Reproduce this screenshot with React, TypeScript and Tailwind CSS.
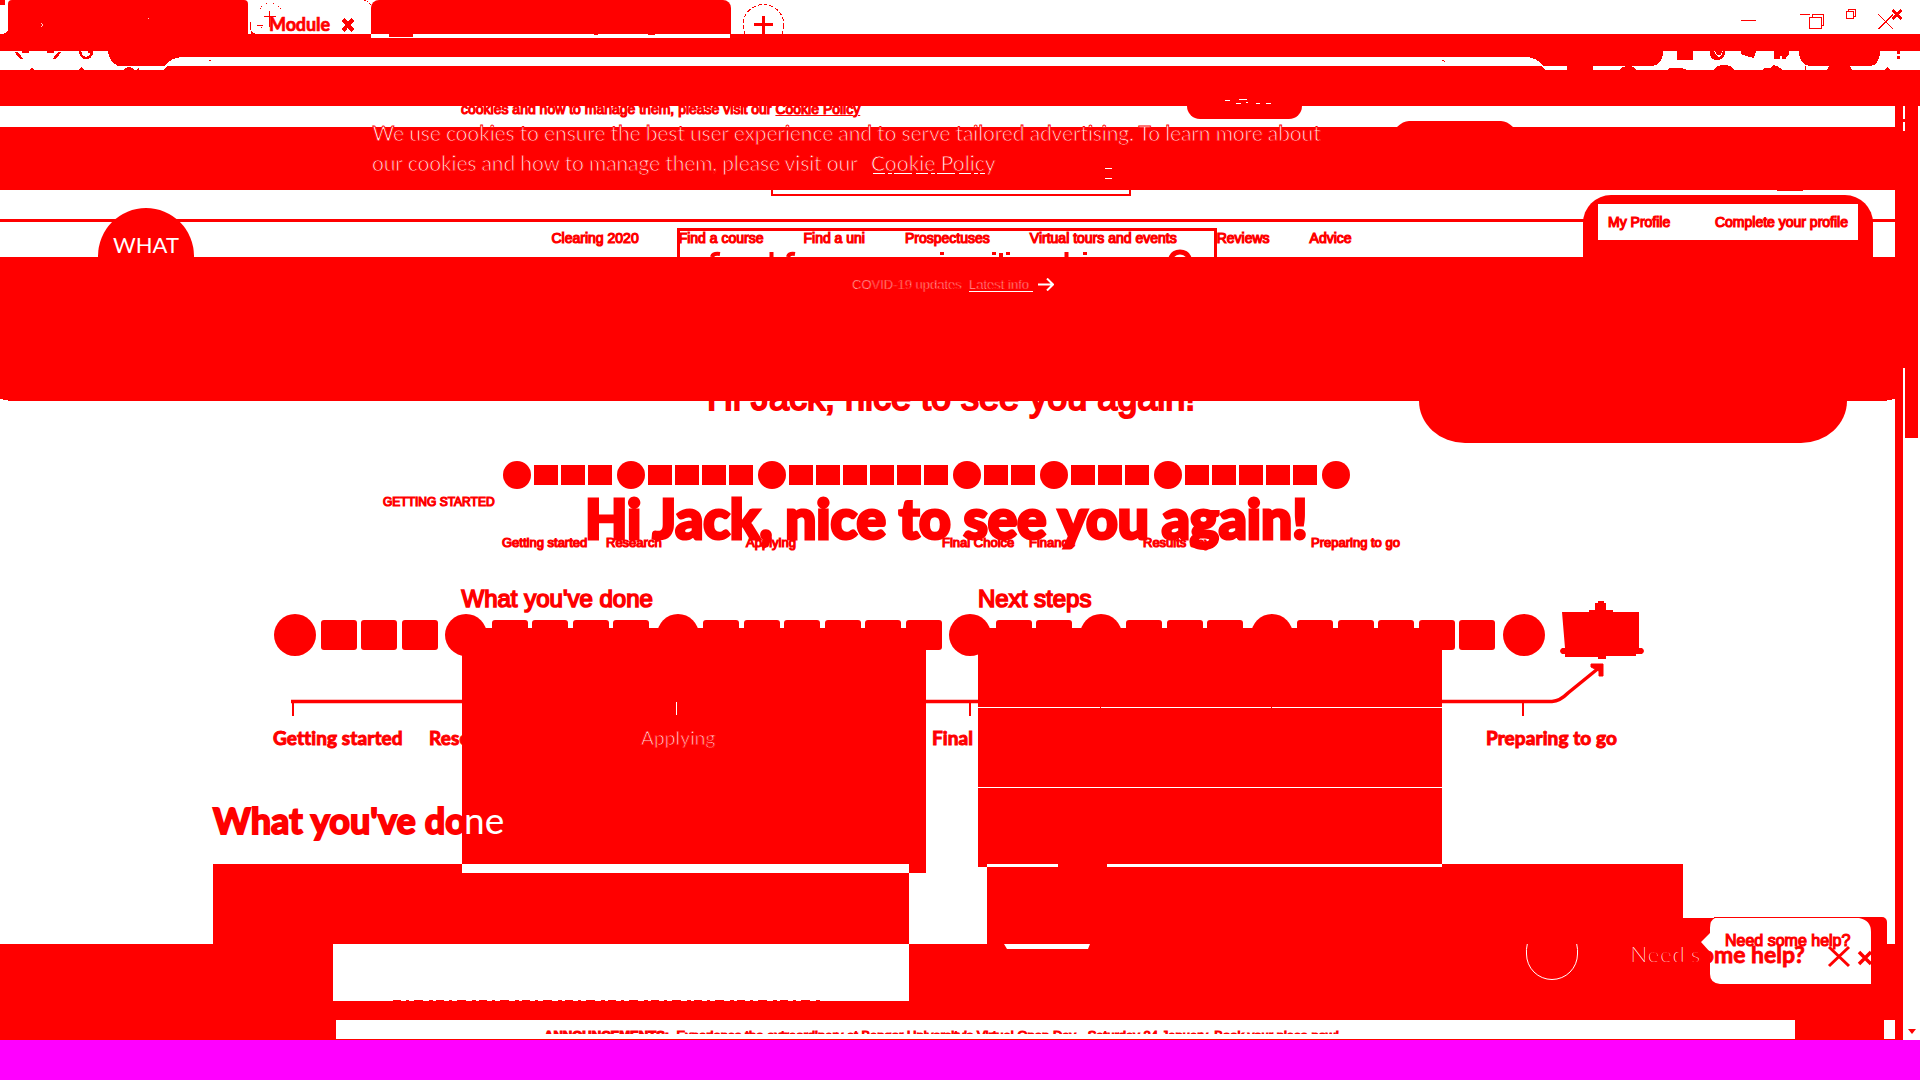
import type { ReactNode } from "react";

const STEPS = [3, 4, 6, 2, 3, 5];
const NAV = ["Clearing 2020", "Find a course", "Find a uni", "Prospectuses", "Virtual tours and events", "Reviews", "Advice"];
const SANS = "font-['Liberation_Sans',sans-serif] [-webkit-text-stroke:1.2px_#f00]";
const ETCHED = "font-['Lato',sans-serif] text-white [-webkit-text-stroke:0.9px_#f00]";

function Label({ at, children }: { at: string; children: ReactNode }) {
  return <span className={`absolute whitespace-nowrap leading-none ${at}`}>{children}</span>;
}

function Block({ at }: { at: string }) {
  return <div className={`absolute bg-[#ff0000] ${at}`} />;
}

function SmallSteps() {
  return (
    <div className="flex h-7 items-center gap-[3px] pl-[501px]">
      {STEPS.map((n, g) => (
        <div key={g} className="flex items-center gap-[3px]">
          <div className="ml-[2px] size-7 rounded-full bg-[#ff0000]" />
          {Array.from({ length: n }, (_, i) => (
            <div key={i} className="h-5 w-6 bg-[#ff0000]" />
          ))}
        </div>
      ))}
      <div className="ml-[2px] size-7 rounded-full bg-[#ff0000]" />
    </div>
  );
}

function LargeSteps() {
  return (
    <div className="flex h-[42px] items-center gap-[4.5px] pl-[271px]">
      {STEPS.map((n, g) => (
        <div key={g} className="flex items-center gap-[4.5px]">
          <div className="ml-[3px] size-[42px] rounded-full bg-[#ff0000]" />
          {Array.from({ length: n }, (_, i) => (
            <div key={i} className="h-[30px] w-9 rounded-[3px] bg-[#ff0000]" />
          ))}
        </div>
      ))}
      <div className="ml-[3px] size-[42px] rounded-full bg-[#ff0000]" />
    </div>
  );
}

function TabStrip() {
  return (
    <div className="relative flex h-[34px] bg-white">
      <div className="ml-2 w-60 rounded-t-[4px] bg-[#ff0000]" />
      <div className="ml-[123px] w-[360px] rounded-t-[8px] bg-[#ff0000]" />
      <Label at="left-[269px] top-[15px] font-['Lato',sans-serif] text-[18px] font-bold [-webkit-text-stroke:0.7px_#f00] tracking-[-0.1px]">Module</Label>
      <svg className="absolute inset-0" width="1920" height="34" fill="none" stroke="#f00" shapeRendering="crispEdges">
        <path d="M0 0h5v5H0zM3 34q5-1 5-6v6zM246 22h5v12h5q-4-1-6-4v-8z" fill="#f00" stroke="none" />
        <path d="M343 19.500l10 11M353 19.500l-10 11" strokeWidth="4" />
        <path d="M264 16.500h12M269.500 11v16M257 25.500h6" strokeWidth="1.500" />
        <path d="M260 8.500h1M261 6.500h1M266 3.500h1M273 3.500h1M278 6.500h1M280 8.500h1M261 27.500h1M364 .5h2M367 1.500h1M369 3.500h1M370 4.500h1" />
        <circle cx="763.500" cy="25" r="20.500" strokeDasharray="4 2" />
        <path d="M754 24.500h19M763.500 16v18" strokeWidth="3.500" />
        <path d="M1741 20.500h15M1800 14.500h10" />
        <path d="M1809.500 17.500h11.500v11h-11.500zM1812.500 17v-3h11v11.500h-3M1846.500 11.500h7v7h-7zM1848.500 11v-2h7v7.500h-2" />
        <path d="M1878.500 14.500l14.500 14.500M1893 14.500l-14.500 14.500" strokeWidth="1.300" />
        <path d="M1892.500 10l9 9M1901.500 10l-9 9" strokeWidth="2.500" />
        <path d="M40.500 23.500h1.500M42.500 24v2M40.500 26.500h1.500M148 18.500h1" stroke="#fff" strokeWidth=".8" />
      </svg>
    </div>
  );
}

function Toolbar() {
  return (
    <div className="relative h-9 bg-white">
      <svg width="1920" height="36" fill="#f00" shapeRendering="crispEdges">
        <path d="M0 0H371V4H730V0H1920V17H1880V20Q1878 32 1870 32H1810Q1800 31 1799 19V17H1663V20Q1662 30 1653 32H1593V36H1567V32H1544Q1536 23 1525 23H182Q170 24 165 32H118Q109 28 108 17H0z" />
        <path d="M163 36l4-4H1541l4 4zM389 0h24v3h-24zM594 0h4v1h-4zM648 0h7v1h-7z" />
        <path d="M1677 17h16v9h-16zM1741 17h15l-2 7-5-1-8-3zM1774 17h15v3l-3 3v2h-4v-3h-2v3h-6z" />
        <path d="M1897 17h3v3h-3zM1897 22h3v3h-3zM1710 17h4l2 4 3 2 3-3 1-3h2q0 9-8 9t-7-9zM1715 17h7l-1 4h-4z" />
        <path d="M1620 36q2-4 8-4t8 4zM1667 36l2-2h13l5 2zM1714 36q2-5 10-5t10 5zM1762 36l3-2h5l3-3 4 1 6 4zM1827 36l2-4h21l2 4zM1885 36l2-3 3 3zM1805 32h1v4h-1z" />
        <path d="M30 36l2-3 2 3zM79 36l2-3 3 3zM123 36q6-6 12 0zM137 36l2-3v3z" />
        <path d="M16 18l6 7M22 18h7M60 18l-6 7M47 18h7M80 17q1 7 6 7t6-6" stroke="#f00" strokeWidth="2.500" fill="none" />
        <path d="M88 17h5v2h-5zM209 26h2v1h-2zM1442 26h2v1h-2zM1444 27h1v1h-1z" />
      </svg>
    </div>
  );
}

function CookieNotice() {
  return (
    <>
      <div className="h-9 bg-[#ff0000]" />
      <div className="relative h-[21px] overflow-hidden bg-white">
        <Label at={`left-[461px] top-[-4px] text-[14px] ${SANS}`}>
          cookies and how to manage them, please visit our <span className="underline underline-offset-1">Cookie Policy</span>
        </Label>
        <Block at="left-[1187px] top-0 h-[13px] w-[115px] rounded-b-[14px]" />
        <svg className="absolute left-[1397px] top-[15px]" width="116" height="6" fill="#f00">
          <path d="M0 6Q6 0 12 0H104Q110 0 116 6z" />
        </svg>
      </div>
      <div className="relative h-[63px] bg-[#ff0000]">
        <Label at={`left-[372.500px] top-[-5px] text-[21px] tracking-[-0.13px] ${ETCHED}`}>
          We use cookies to ensure the best user experience and to serve tailored advertising. To learn more about
        </Label>
        <Label at={`left-[372px] top-[25px] text-[21px] tracking-[-0.13px] ${ETCHED}`}>our cookies and how to manage them, please visit our</Label>
        <Label at={`left-[871px] top-[25px] text-[21px] ${ETCHED}`}>Cookie Policy</Label>
        <svg className="absolute inset-0" width="1880" height="63" stroke="#fff" shapeRendering="crispEdges">
          <path d="M873 46.500h112" strokeDasharray="12 3 4 2 18 4" />
          <path d="M1105 41.500h7M1105 51.500h7" />
        </svg>
        <svg className="absolute left-[1225px] top-[-30px]" width="50" height="8" stroke="#fff" fill="none" shapeRendering="crispEdges">
          <path d="M0 3.500h5M14 2.500h8M11 6.500h5M21 5.500h2M31 6.500h4M41 6.500h5" />
        </svg>
      </div>
    </>
  );
}

function SiteHeader() {
  return (
    <div className="relative h-[67px] bg-white">
      <div className="ml-[771px] h-[6px] w-[360px] border-2 border-t-0 border-[#ff0000]" />
      <div className="mt-[23px] h-[3px] bg-[#ff0000]" />
      <div className="absolute left-[98px] top-[18px] h-[49px] w-24 rounded-t-full bg-[#ff0000]" />
      <Label at="left-[113px] top-[44px] font-['Lato',sans-serif] text-[22px] text-white">WHAT</Label>
      <div className="absolute left-[677px] top-[38px] h-[29px] w-[540px] border-[3px] border-b-0 border-[#ff0000]" />
      <nav className={`ml-[551.500px] mt-[9px] flex gap-10 whitespace-nowrap text-[14px] leading-none ${SANS}`}>
        {NAV.map((item) => (
          <span key={item}>{item}</span>
        ))}
      </nav>
      <svg className="absolute left-[700px] top-[59px]" width="500" height="8" fill="none" stroke="#f00" strokeWidth="4">
        <path d="M12 8q1-4 8-3M71.500 3v5M88 8q1-4 7-3M242 3v3M294 3v3M301 4v4M308 3v3M366.500 3v5M385 3v3" />
        <path d="M471 9q2-6 9-6t9 6" strokeWidth="5" />
      </svg>
      <div className="absolute left-[1583px] top-[5px] h-[62px] w-[290px] rounded-t-[28px] bg-[#ff0000] px-[15px] pt-[9px]">
        <div className={`flex h-9 items-center justify-between bg-white px-[10px] text-[14px] ${SANS}`}>
          <span>My Profile</span>
          <span>Complete your profile</span>
        </div>
      </div>
      <Block at="left-[1777px] top-0 h-px w-[26px]" />
    </div>
  );
}

function Hero() {
  return (
    <div className="relative z-10 h-36 bg-[#ff0000]">
      <div className="flex h-[33px] items-center whitespace-nowrap pl-[852px] pt-[21px] text-[13px] leading-none">
        <span className="w-[117px] font-['Liberation_Sans',sans-serif] text-white [-webkit-text-stroke:0.7px_#f00]">COVID-19 updates</span>
        <span className="w-16 font-['Liberation_Sans',sans-serif] text-white shadow-[0_1px_0_#fff] [-webkit-text-stroke:0.7px_#f00]">Latest info</span>
        <svg className="ml-[5px]" width="16" height="13" fill="none" stroke="#fff" strokeWidth="2">
          <path d="M0 6.500h14M9 .5l6 6-6 6" />
        </svg>
      </div>
      <svg className="absolute bottom-0 left-0" width="1895" height="2" fill="#fff">
        <path d="M0 0h3v1h5v1H0zM1895 0h-3v1h-5v1h8z" />
      </svg>
      <Block at="left-[1419px] top-[100px] h-[86px] w-[428px] rounded-b-[46px_42px]" />
    </div>
  );
}

function Journey() {
  const small = `top-[135px] text-[13px] ${SANS}`;
  const large = "font-['Lato',sans-serif] text-[19px] font-bold [-webkit-text-stroke:1px_#f00] tracking-[0.1px] top-[327px]";
  return (
    <div className="relative h-[543px] bg-white">
      <Label at="left-[707px] top-[-21px] font-['Liberation_Sans',sans-serif] text-[36px] [-webkit-text-stroke:2px_#f00]">Hi Jack, nice to see you again!</Label>
      <div className="pt-[60px]">
        <SmallSteps />
      </div>
      <div className="pt-[125px]">
        <LargeSteps />
      </div>
      <Label at="left-[585px] top-[90px] font-['Lato',sans-serif] text-[55px] font-black tracking-[-0.15px] [-webkit-text-stroke:3px_#f00]">Hi Jack, nice to see you again!</Label>
      <Label at={`left-[383px] top-[95px] text-[12px] ${SANS}`}>GETTING STARTED</Label>
      <Label at={`left-[502px] ${small}`}>Getting started</Label>
      <Label at={`left-[606px] ${small}`}>Research</Label>
      <Label at={`left-[746px] ${small}`}>Applying</Label>
      <Label at={`left-[942px] ${small}`}>Final Choice</Label>
      <Label at={`left-[1029px] ${small}`}>Finance</Label>
      <Label at={`left-[1143px] ${small}`}>Results day</Label>
      <Label at={`left-[1311px] ${small}`}>Preparing to go</Label>
      <Label at="left-[461.500px] top-[186px] font-['Liberation_Sans',sans-serif] text-[24px] [-webkit-text-stroke:1.6px_#f00]">What you've done</Label>
      <Label at="left-[978px] top-[186px] font-['Liberation_Sans',sans-serif] text-[24px] [-webkit-text-stroke:1.6px_#f00]">Next steps</Label>
      <svg className="absolute left-0 top-[190px]" width="1895" height="140" fill="none" stroke="#f00">
        <path d="M291 110.500H1552Q1560 110 1568 102L1600 76" strokeWidth="3.500" />
        <path d="M293 112v13M970 112v13M1523 112v13" strokeWidth="2" />
        <path d="M1591 73h12v12h-4v-5l-8-4z" fill="#f00" />
        <path d="M1562 21h27v-2h6v-7h3v-2h6v2h2v7h7v2h26v36h3q4 3 0 6h-6v2h-30v3h-8v-2h-33v-3h-3q-4-3 0-6h3z" fill="#f00" stroke="none" />
      </svg>
      <Label at={`left-[273px] ${large}`}>Getting started</Label>
      <Label at={`left-[429px] ${large}`}>Research</Label>
      <Label at={`left-[932px] ${large}`}>Final</Label>
      <Label at={`left-[1486px] ${large}`}>Preparing to go</Label>
      <Label at="left-[213px] top-[401px] font-['Lato',sans-serif] text-[36px] font-bold tracking-[0.1px] [-webkit-text-stroke:2px_#f00]">What you've done</Label>
      <Block at="left-[462px] top-[227px] h-[236px] w-[464px]" />
      <Block at="left-[909px] top-[463px] h-[9px] w-[17px]" />
      <Block at="left-[213px] top-[463px] h-[80px] w-[249px]" />
      <Block at="left-[462px] top-[472px] h-[71px] w-[447px]" />
      <Block at="left-[978px] top-[227px] h-[239px] w-[464px]" />
      <Block at="left-[987px] top-[463px] h-[80px] w-[696px]" />
      <svg className="absolute left-0 top-[227px]" width="1500" height="240" fill="#fff" shapeRendering="crispEdges">
        <path d="M978 79h464v1H978zM978 159h464v1H978zM978 239h9v1h-9zM987 236h71v3h-71zM1107 236h335v3h-335zM676 74h1v13h-1z" />
        <path d="M1100 79h1v1h-1zM1271 79h1v1h-1z" fill="#f00" />
      </svg>
      <Label at={`left-[641px] top-[327px] text-[19px] tracking-[0.15px] ${ETCHED}`}>Applying</Label>
      <Label at="left-[464px] top-[400px] font-['Lato',sans-serif] text-[37px] text-white">ne</Label>
      <Block at="left-[1683px] top-[517px] h-[26px] w-[31px]" />
      <Block at="left-[1714px] top-[516px] h-[27px] w-[173px] rounded-tr-[5px]" />
    </div>
  );
}

function Footer() {
  return (
    <div className="relative h-24 bg-[#ff0000]">
      <div className="ml-[333px] h-[57px] w-[576px] bg-white" />
      <div className="mt-[19px] flex h-[19px]">
        <div className="ml-[336px] w-[1459px] overflow-hidden bg-white pt-[9px]">
          <div className={`h-[5px] overflow-hidden whitespace-nowrap pl-[208px] text-[13px] leading-none tracking-[0.02px] ${SANS}`}>
            <span className="font-bold">ANNOUNCEMENTS:</span>&nbsp; Experience the extraordinary at Bangor University's Virtual Open Day - Saturday 24 January. Book your place now!
          </div>
        </div>
        <div className="ml-[89px] w-[11px] bg-white" />
      </div>
      <svg className="absolute left-0 top-[-30px]" width="1895" height="90" fill="none" stroke="#fff">
        <path d="M1004 30h86l-2 5h-81z" fill="#fff" stroke="none" />
        <path d="M1527.300 30Q1526 36 1526.500 40A25.500 25.500 0 0 0 1577.500 40Q1578 36 1576.700 30" />
        <path d="M1715 4H1859Q1871 6 1871 18V70H1720Q1710 69 1710 60V38L1701 28L1710 19V14Q1710 6 1715 4z" fill="#fff" stroke="none" />
        <path d="M393 86.500h430" stroke="#f00" strokeDasharray="8 5 3 5 9 6 4 3" />
        <path d="M1829 33l20 19M1849 33l-20 19" stroke="#f00" strokeWidth="3" />
        <path d="M1859 38l12 12M1871 38l-12 12" stroke="#f00" strokeWidth="3.500" />
      </svg>
      <Label at={`left-[1725px] top-[-11px] text-[16px] ${SANS}`}>Need some help?</Label>
      <Label at="left-[1630px] top-[-1px] font-['Lato',sans-serif] text-[23px] font-bold [-webkit-text-stroke:0.8px_#f00]">
        <span className="text-white [-webkit-text-stroke:2px_#f00]">Need s</span>ome help?
      </Label>
    </div>
  );
}

function ScrollRail() {
  return (
    <div className="relative z-20 flex w-[25px] bg-white">
      <div className="w-2 bg-[#ff0000]" />
      <div className="w-[2px]">
        <div className="h-9 bg-[#ff0000]" />
        <div className="mt-[13px] h-[3px] bg-[#ff0000]" />
        <div className="mt-[9px] h-[237px] bg-[#ff0000]" />
      </div>
      <div className="h-[368px] w-[13px] bg-[#ff0000]" />
      <Block at="left-[23px] top-0 h-9 w-[2px]" />
      <svg className="absolute bottom-[6px] left-[13px]" width="8" height="5" fill="#f00">
        <path d="M0 0h8L4 5z" />
      </svg>
    </div>
  );
}

export default function App() {
  return (
    <div className="flex h-[1080px] w-[1920px] flex-col overflow-hidden bg-white text-[#ff0000]">
      <TabStrip />
      <Toolbar />
      <div className="flex h-[970px]">
        <main className="w-[1895px]">
          <CookieNotice />
          <SiteHeader />
          <Hero />
          <Journey />
          <Footer />
        </main>
        <ScrollRail />
      </div>
      <div className="h-10 bg-[#ff00ff]" />
    </div>
  );
}
